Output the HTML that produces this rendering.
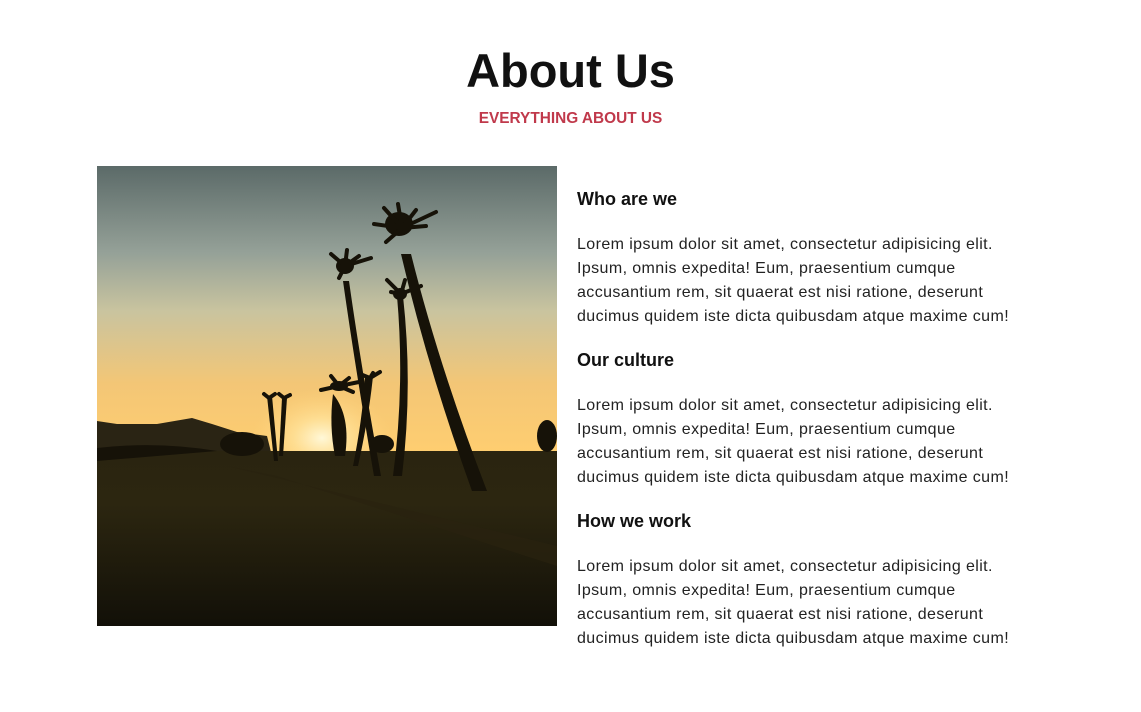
<!DOCTYPE html>
<html><head><meta charset="utf-8"><style>
body{margin:0;background:#fff;width:1141px;height:712px;overflow:hidden;font-family:"Liberation Sans",sans-serif;color:#111}
h1{position:absolute;top:42px;left:0;width:1141px;text-align:center;margin:0;font-size:47px;font-weight:bold;line-height:58px;color:#111}
.sub{position:absolute;top:109px;left:0;width:1141px;text-align:center;font-size:15.4px;font-weight:bold;color:#c0394b;line-height:20px}
.img{position:absolute;left:97px;top:166px;width:460px;height:460px}
.col{position:absolute;left:577px;top:187px;width:540px}
h3{margin:0;font-size:18px;line-height:24px;font-weight:bold;color:#111;height:46px}
p{margin:0 0 19px;font-size:16px;line-height:24px;color:#222;white-space:nowrap;letter-spacing:0.4px}
</style></head><body>
<h1>About Us</h1>
<div class="sub">EVERYTHING ABOUT US</div>
<svg class="img" viewBox="0 0 460 460">
<defs>
<linearGradient id="sky" x1="0" y1="0" x2="0" y2="1">
<stop offset="0" stop-color="#5b6a68"/><stop offset="0.3" stop-color="#95a198"/><stop offset="0.5" stop-color="#c9c49f"/><stop offset="0.75" stop-color="#f3c676"/><stop offset="1" stop-color="#ffce70"/></linearGradient>
<radialGradient id="sun" cx="0.5" cy="0.5" r="0.5"><stop offset="0" stop-color="#fff8d8"/><stop offset="0.4" stop-color="#ffe29a" stop-opacity="0.8"/><stop offset="1" stop-color="#ffd27a" stop-opacity="0"/></radialGradient>
<linearGradient id="gr" x1="0" y1="0" x2="0" y2="1"><stop offset="0" stop-color="#2a2410"/><stop offset="0.3" stop-color="#2c2610"/><stop offset="1" stop-color="#121008"/></linearGradient>
</defs>
<rect width="460" height="290" fill="url(#sky)"/>
<ellipse cx="225" cy="272" rx="70" ry="50" fill="url(#sun)"/>
<path d="M0 255 L20 258 L60 258 L95 252 L115 258 L140 266 L170 270 L175 290 L0 290Z" fill="#2a2414"/>
<rect y="285" width="460" height="175" fill="url(#gr)"/>
<path d="M130 300 L460 380 L460 400 L180 310Z" fill="#2a2210" opacity="0.7"/>
<g fill="#161208">
<path d="M0 282 Q60 275 120 285 L0 295Z"/>
<ellipse cx="145" cy="278" rx="22" ry="12"/><ellipse cx="285" cy="278" rx="12" ry="9"/><ellipse cx="450" cy="270" rx="10" ry="16"/>
<path d="M246 115 Q258 200 277 310 L284 310 Q264 200 252 115Z"/>
<path d="M304 88 Q330 200 375 325 L390 325 Q342 200 314 88Z"/>
<path d="M300 130 Q308 220 296 310 L305 310 Q316 220 306 130Z"/>
<path d="M268 210 Q266 250 256 300 L261 300 Q272 250 276 210Z"/>
<path d="M170 230 L177 295 L181 295 L175 230Z"/><path d="M185 232 L182 290 L186 290 L190 232Z"/>
<path d="M236 228 Q254 250 248 290 L238 290 Q232 260 236 228Z"/>
<ellipse cx="302" cy="58" rx="14" ry="12"/><ellipse cx="248" cy="100" rx="9" ry="8"/><ellipse cx="303" cy="128" rx="7" ry="6"/><ellipse cx="242" cy="220" rx="9" ry="5"/>
<g stroke="#161208" stroke-width="4" stroke-linecap="round">
<path d="M305 62 l-28 -4 M305 62 l-18 -20 M305 62 l-4 -24 M305 62 l14 -18 M305 62 l34 -16 M305 62 l24 -2 M305 62 l-16 14"/>
<path d="M248 100 l-14 -12 M248 100 l2 -16 M248 100 l26 -8 M248 100 l-6 12 M248 100 l14 -10"/>
<path d="M304 128 l-14 -14 M304 128 l4 -14 M304 128 l20 -8 M304 128 l-10 -2"/>
<path d="M242 220 l-18 4 M242 220 l-8 -10 M242 220 l10 -8 M242 220 l20 -4 M242 220 l14 6"/>
<path d="M273 212 l-10 -4 M273 212 l10 -6 M273 212 l3 -5"/>
<path d="M172 232 l-5 -4 M172 232 l6 -4 M187 232 l-5 -4 M187 232 l6 -3"/>
</g></g>
</svg>
<div class="col">
<h3>Who are we</h3>
<p>Lorem ipsum dolor sit amet, consectetur adipisicing elit.<br>Ipsum, omnis expedita! Eum, praesentium cumque<br>accusantium rem, sit quaerat est nisi ratione, deserunt<br>ducimus quidem iste dicta quibusdam atque maxime cum!</p>
<h3>Our culture</h3>
<p>Lorem ipsum dolor sit amet, consectetur adipisicing elit.<br>Ipsum, omnis expedita! Eum, praesentium cumque<br>accusantium rem, sit quaerat est nisi ratione, deserunt<br>ducimus quidem iste dicta quibusdam atque maxime cum!</p>
<h3>How we work</h3>
<p>Lorem ipsum dolor sit amet, consectetur adipisicing elit.<br>Ipsum, omnis expedita! Eum, praesentium cumque<br>accusantium rem, sit quaerat est nisi ratione, deserunt<br>ducimus quidem iste dicta quibusdam atque maxime cum!</p>
</div>
</body></html>
